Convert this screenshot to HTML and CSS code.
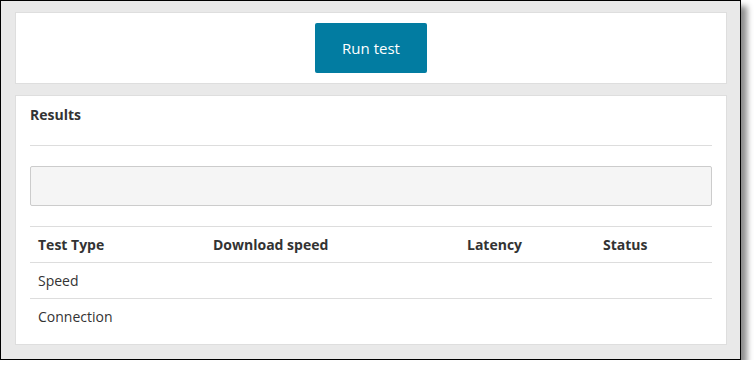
FILE: index.html
```html
<!DOCTYPE html>
<html lang="en">
    <head>
        <meta charset="UTF-8">
        <title>Network test</title>
        <link rel="stylesheet" href="styles.css">
    </head>

    <body>

        <div class="frame">

            <div class="card run_card">
                <button class="run_button">Run test</button>
            </div>

            <div class="card results_card">
                <h3 class="results_title">Results</h3>
                <hr class="divider">

                <div class="message_box"></div>

                <table class="results_table">
                    <colgroup>
                        <col class="col_type">
                        <col class="col_download">
                        <col class="col_latency">
                        <col class="col_status">
                    </colgroup>
                    <thead>
                        <tr>
                            <th>Test Type</th>
                            <th>Download speed</th>
                            <th>Latency</th>
                            <th>Status</th>
                        </tr>
                    </thead>
                    <tbody>
                        <tr>
                            <td>Speed</td>
                            <td></td>
                            <td></td>
                            <td></td>
                        </tr>
                        <tr>
                            <td>Connection</td>
                            <td></td>
                            <td></td>
                            <td></td>
                        </tr>
                    </tbody>
                </table>
            </div>

        </div>

    </body>
</html>
```

FILE: styles.css
```css
body {
    margin: 0;
    background-color: white;
    font-family: 'Open Sans', 'Noto Sans', sans-serif;
    color: #333333;
}

/* screenshot frame with the drop shadow */
.frame {
    box-sizing: border-box;
    width: 741px;
    height: 360px;
    border: 1px solid black;
    background-color: #e9e9e9;
    padding: 11px 13px 0 14px;
    box-shadow: 6px 6px 6px rgba(0, 0, 0, 0.45);
}

.card {
    background-color: white;
    border: 1px solid #dedede;
}

.run_card {
    display: flex;
    justify-content: center;
    padding: 10px;
}

.run_button {
    width: 112px;
    height: 50px;
    border: none;
    border-radius: 2px;
    background-color: #027ca1;
    color: white;
    font-family: 'Open Sans', 'Noto Sans', sans-serif;
    font-size: 15px;
}

.results_card {
    margin-top: 11px;
    padding: 9px 14px 10px 14px;
}

.results_title {
    margin: 0;
    padding-bottom: 20px;
    font-size: 14px;
    line-height: 20px;
    font-weight: bold;
}

.divider {
    margin: 0;
    border: none;
    border-top: 1px solid #dddddd;
}

.message_box {
    height: 38px;
    margin: 20px 0;
    border: 1px solid #cccccc;
    border-radius: 2px;
    background-color: #f5f5f5;
}

.results_table {
    width: 100%;
    table-layout: fixed;
    border-collapse: collapse;
    font-size: 14px;
}

.col_type { width: 175px; }
.col_download { width: 254px; }
.col_latency { width: 136px; }
.col_status { width: 117px; }

.results_table th,
.results_table td {
    padding: 8px 8px 7px 8px;
    line-height: 20px;
    text-align: left;
    border-top: 1px solid #dddddd;
}

.results_table th {
    font-weight: bold;
}
```
